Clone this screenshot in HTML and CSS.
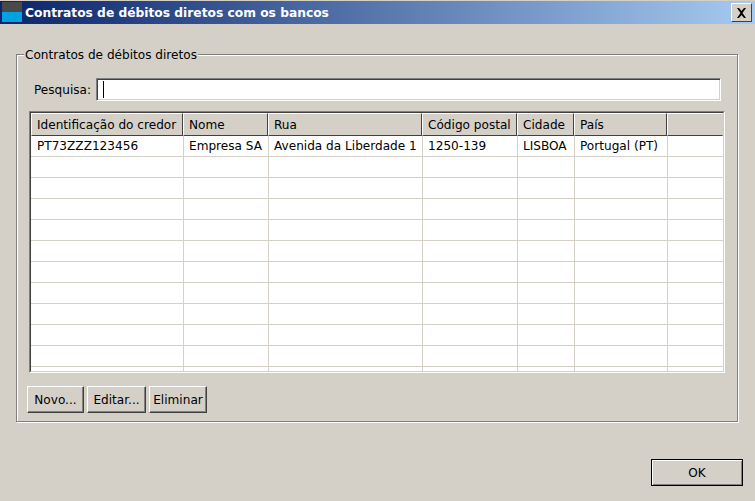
FILE: index.html
```html
<!DOCTYPE html>
<html lang="pt">
<head>
<meta charset="utf-8">
<title>Contratos de débitos diretos com os bancos</title>
<link rel="stylesheet" href="styles.css">
</head>
<body>
<div class="window">
  <header class="titlebar">
    <svg class="app-icon" width="20" height="20" viewBox="0 0 20 20" aria-hidden="true"><rect width="20" height="10" fill="#4a4a4a"/><rect y="10" width="20" height="10" fill="#00a2e0"/></svg>
    <span class="title">Contratos de débitos diretos com os bancos</span>
    <button class="close" aria-label="Fechar"><svg width="11" height="10" viewBox="0 0 11 10" aria-hidden="true"><path d="M1 0h2l2.500 3L8 0h2L6.500 5 10 10H8L5.500 7 3 10H1l3.500-5z" fill="#000"/></svg></button>
  </header>
  <main class="content">
    <fieldset class="group">
      <legend class="group-label">Contratos de débitos diretos</legend>
      <div class="search-row">
        <label class="search-label" for="q">Pesquisa:</label>
        <div class="search-input" id="q"><span class="caret"></span></div>
      </div>
      <div class="table-frame">
        <div class="table-well">
          <table class="grid">
            <colgroup>
              <col class="c1"><col class="c2"><col class="c3"><col class="c4"><col class="c5"><col class="c6"><col class="c7">
            </colgroup>
            <thead>
              <tr><th>Identificação do credor</th><th>Nome</th><th>Rua</th><th>Código postal</th><th>Cidade</th><th>País</th><th></th></tr>
            </thead>
            <tbody>
              <tr><td>PT73ZZZ123456</td><td>Empresa SA</td><td>Avenida da Liberdade 1</td><td>1250-139</td><td>LISBOA</td><td>Portugal (PT)</td><td></td></tr>
              <tr><td></td><td></td><td></td><td></td><td></td><td></td><td></td></tr>
              <tr><td></td><td></td><td></td><td></td><td></td><td></td><td></td></tr>
              <tr><td></td><td></td><td></td><td></td><td></td><td></td><td></td></tr>
              <tr><td></td><td></td><td></td><td></td><td></td><td></td><td></td></tr>
              <tr><td></td><td></td><td></td><td></td><td></td><td></td><td></td></tr>
              <tr><td></td><td></td><td></td><td></td><td></td><td></td><td></td></tr>
              <tr><td></td><td></td><td></td><td></td><td></td><td></td><td></td></tr>
              <tr><td></td><td></td><td></td><td></td><td></td><td></td><td></td></tr>
              <tr><td></td><td></td><td></td><td></td><td></td><td></td><td></td></tr>
              <tr><td></td><td></td><td></td><td></td><td></td><td></td><td></td></tr>
              <tr><td></td><td></td><td></td><td></td><td></td><td></td><td></td></tr>
            </tbody>
          </table>
        </div>
      </div>
      <div class="actions">
        <button class="btn btn-new">Novo...</button>
        <button class="btn btn-edit">Editar...</button>
        <button class="btn btn-del">Eliminar</button>
      </div>
    </fieldset>
    <div class="footer">
      <button class="btn btn-ok">OK</button>
    </div>
  </main>
</div>
</body>
</html>
```
FILE: styles.css
```css
* { box-sizing: border-box; }
html, body { margin: 0; height: 100%; }
body {
  background: #d4d0c8;
  font-family: "DejaVu Sans", Verdana, sans-serif;
  font-size: 12.1px;
  color: #000;
  overflow: hidden;
}
.window { width: 755px; height: 501px; display: flex; flex-direction: column; }
.titlebar {
  height: 23px;
  margin-top: 1px;
  flex: none;
  display: flex;
  align-items: center;
  padding: 0 3px 0 2px;
  background: linear-gradient(to right, #0a246a, #a6caf0);
  color: #fff;
}
.app-icon { flex: none; align-self: flex-start; margin-top: 1px; }
.title { margin-left: 3px; font-weight: bold; font-size: 12.25px; white-space: nowrap; flex: 1; }
.close {
  width: 21px; height: 19px; padding: 0; flex: none;
  display: flex; align-items: center; justify-content: center;
  background: #d4d0c8;
  border: 1px solid;
  border-color: #fff #404040 #404040 #fff;
}
.content { flex: 1; display: flex; flex-direction: column; padding: 21px 18px 15px 16px; }
.group {
  margin: 0; padding: 0 12px 0 10px;
  height: 377px;
  border: 1px solid #808080;
  box-shadow: 1px 1px 0 #fff, inset 1px 1px 0 #fff;
  display: block;
}
.group-label { padding: 2px 1px 0; margin-left: -3px; background: #d4d0c8; line-height: 16px; }
.search-row { display: flex; align-items: center; gap: 5px; margin-top: 15px; padding-left: 7px; }
.search-label { flex: 0 0 57px; white-space: nowrap; }
.search-input {
  flex: 1; height: 23px; background: #fff;
  border: 1px solid; border-color: #808080 #fff #fff #808080;
  box-shadow: inset 1px 1px 0 #404040, inset -1px -1px 0 #d4d0c8;
  display: flex; align-items: center; padding-left: 6px;
  margin-right: 4px;
}
.caret { width: 1px; height: 17px; background: #000; }
.table-frame {
  margin: 10px 0 0 2px;
  width: 696px; height: 262px;
  border: 1px solid; border-color: #808080 #fff #fff #808080;
}
.table-well {
  height: 100%;
  border: 1px solid; border-color: #404040 #d4d0c8 #d4d0c8 #404040;
  background: #fff;
  overflow: hidden;
}
.grid { border-collapse: separate; border-spacing: 0; table-layout: fixed; width: 692px; }
.c1 { width: 152px; } .c2 { width: 85px; } .c3 { width: 154px; } .c4 { width: 95px; }
.c5 { width: 57px; } .c6 { width: 93px; } .c7 { width: 56px; }
.grid th {
  height: 23px; padding: 0 0 0 5px;
  font-weight: normal; text-align: left; white-space: nowrap; overflow: hidden;
  background: #d4d0c8;
  border: 1px solid; border-color: #fff #404040 #404040 #fff;
}
.grid th:last-child { border-right-color: #d4d0c8; }
.grid td {
  height: 21px; padding: 0 0 0 5px;
  white-space: nowrap; overflow: hidden;
  background: #fff;
  border-left: 1px solid #d4d0c8;
  border-bottom: 1px solid #d4d0c8;
}
.grid td:first-child { border-left: 0; padding-left: 6px; }
.actions { display: flex; gap: 3px; margin-top: 13px; }
.btn {
  font: inherit; color: #000; height: 27px; padding: 0;
  background: #d4d0c8;
  border: 1px solid; border-color: #fff #404040 #404040 #fff;
  box-shadow: inset -1px -1px 0 #808080;
}
.btn-new { width: 57px; } .btn-edit { width: 59px; } .btn-del { width: 58px; }
.footer { display: flex; justify-content: flex-end; margin-top: auto; margin-right: -6px; }
.btn-ok {
  width: 92px; height: 27px;
  border-color: #000;
  box-shadow: inset 1px 1px 0 #fff, inset -1px -1px 0 #808080;
}
```
